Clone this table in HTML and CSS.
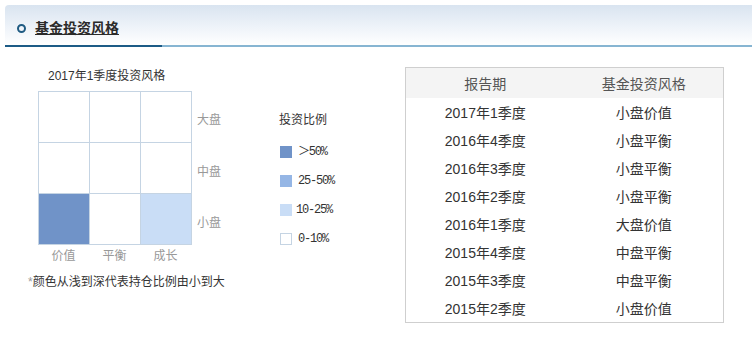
FILE: index.html
```html
<!DOCTYPE html>
<html lang="zh-CN">
<head>
<meta charset="utf-8">
<title>基金投资风格</title>
<link rel="stylesheet" href="styles.css">
</head>
<body>
<div class="page">
  <div class="header">
    <span class="ring"></span>
    <h2 class="title">基金投资风格</h2>
  </div>
  <div class="content">
    <div class="chart-panel">
      <div class="chart-row">
        <div class="chart">
          <div class="chart-title">2017年1季度投资风格</div>
          <div class="matrix-row">
            <div class="matrix">
              <div class="cell"></div><div class="cell"></div><div class="cell"></div>
              <div class="cell"></div><div class="cell"></div><div class="cell"></div>
              <div class="cell c-dark"></div><div class="cell"></div><div class="cell c-light"></div>
            </div>
            <div class="row-labels">
              <span>大盘</span>
              <span>中盘</span>
              <span>小盘</span>
            </div>
          </div>
          <div class="col-labels">
            <span>价值</span><span>平衡</span><span>成长</span>
          </div>
        </div>
        <div class="legend">
          <div class="legend-title">投资比例</div>
          <div class="legend-item"><span class="swatch c-dark"></span><span class="legend-label">＞50%</span></div>
          <div class="legend-item"><span class="swatch c-mid"></span><span class="legend-label">25-50%</span></div>
          <div class="legend-item"><span class="swatch c-light"></span><span class="legend-label shift-l">10-25%</span></div>
          <div class="legend-item"><span class="swatch c-empty"></span><span class="legend-label">0-10%</span></div>
        </div>
      </div>
      <div class="note"><span class="star">*</span>颜色从浅到深代表持仓比例由小到大</div>
    </div>
    <table class="style-table">
      <thead>
        <tr><th>报告期</th><th>基金投资风格</th></tr>
      </thead>
      <tbody>
        <tr><td>2017年1季度</td><td>小盘价值</td></tr>
        <tr><td>2016年4季度</td><td>小盘平衡</td></tr>
        <tr><td>2016年3季度</td><td>小盘平衡</td></tr>
        <tr><td>2016年2季度</td><td>小盘平衡</td></tr>
        <tr><td>2016年1季度</td><td>大盘价值</td></tr>
        <tr><td>2015年4季度</td><td>中盘平衡</td></tr>
        <tr><td>2015年3季度</td><td>中盘平衡</td></tr>
        <tr><td>2015年2季度</td><td>小盘价值</td></tr>
      </tbody>
    </table>
  </div>
</div>
</body>
</html>
```
FILE: styles.css
```css
html, body {
  margin: 0;
  padding: 0;
  background: #ffffff;
}
body {
  font-family: "Liberation Sans", "Noto Sans CJK SC", sans-serif;
  color: #333333;
}
.page {
  padding: 5px 0 0 5px;
}
.header {
  height: 42px;
  box-sizing: border-box;
  padding: 4px 0 0 12px;
  display: flex;
  align-items: center;
  border-top-left-radius: 4px;
  background-image:
    linear-gradient(#1c5b86, #1c5b86),
    linear-gradient(#87b5d2, #87b5d2),
    linear-gradient(to bottom, #d9e4f0 0%, #eef3f9 55%, #ffffff 100%);
  background-repeat: no-repeat;
  background-position: left bottom, left bottom, left top;
  background-size: 157px 2px, 100% 2px, 100% 40px;
}
.ring {
  width: 9px;
  height: 9px;
  box-sizing: border-box;
  border: 2px solid #1f5b82;
  border-radius: 50%;
  margin-right: 9px;
}
.title {
  margin: 0;
  font-size: 14px;
  line-height: 18px;
  font-weight: bold;
  color: #2b2b2b;
  text-decoration: underline;
  text-underline-offset: 1px;
}
.content {
  display: flex;
  padding: 20px 0 0 23px;
}
.chart-panel {
  width: 377px;
  padding-top: 1px;
}
.chart-row {
  display: flex;
}
.chart {
  margin-left: 10px;
  font-size: 12px;
}
.chart-title {
  margin-left: 10px;
  line-height: 16px;
  color: #333333;
}
.matrix-row {
  display: flex;
  margin-top: 7px;
}
.matrix {
  display: grid;
  grid-template-columns: repeat(3, 50px);
  grid-template-rows: repeat(3, 50px);
  gap: 1px;
  padding: 1px;
  background: #c5d4e3;
}
.cell {
  background: #ffffff;
}
.c-dark { background: #7093c8; }
.c-mid { background: #95b6e5; }
.c-light { background: #c9ddf6; }
.c-empty { background: #ffffff; border: 1px solid #c5d4e3; box-sizing: border-box; }
.row-labels {
  display: flex;
  flex-direction: column;
  padding-top: 1px;
}
.row-labels span {
  height: 51px;
  box-sizing: border-box;
  padding: 3px 0 0 5px;
  display: flex;
  align-items: center;
  color: #999999;
}
.row-labels span:first-child {
  padding-top: 1px;
}
.col-labels {
  display: flex;
  margin-top: 3px;
  line-height: 16px;
  color: #999999;
}
.col-labels span {
  width: 51px;
  text-align: center;
}
.legend {
  margin: 44px 0 0 58px;
  display: flex;
  flex-direction: column;
  gap: 17px;
}
.legend-title {
  font-size: 12px;
  line-height: 16px;
  margin-bottom: 1px;
  color: #333333;
}
.legend-item {
  display: flex;
  align-items: center;
  height: 12px;
  padding-left: 1px;
}
.swatch {
  width: 12px;
  height: 12px;
}
.legend-label {
  margin-left: 6px;
  font-family: "Liberation Mono", "Noto Sans CJK SC", monospace;
  font-size: 12px;
  letter-spacing: -1.2px;
  line-height: 12px;
  color: #333333;
}
.legend-label.shift-l {
  margin-left: 4px;
}
.note {
  margin-top: 10px;
  font-size: 12px;
  line-height: 16px;
  color: #333333;
}
.star {
  color: #999999;
}
.style-table {
  width: 319px;
  border: 1px solid #cfcfcf;
  border-spacing: 0;
  border-collapse: separate;
  table-layout: fixed;
  font-size: 14px;
  align-self: flex-start;
}
.style-table th {
  height: 30px;
  padding: 0;
  background: #f4f4f4;
  color: #555555;
  font-weight: normal;
  text-align: center;
  width: 50%;
}
.style-table td {
  height: 28px;
  padding: 0;
  text-align: center;
  color: #333333;
}
```
